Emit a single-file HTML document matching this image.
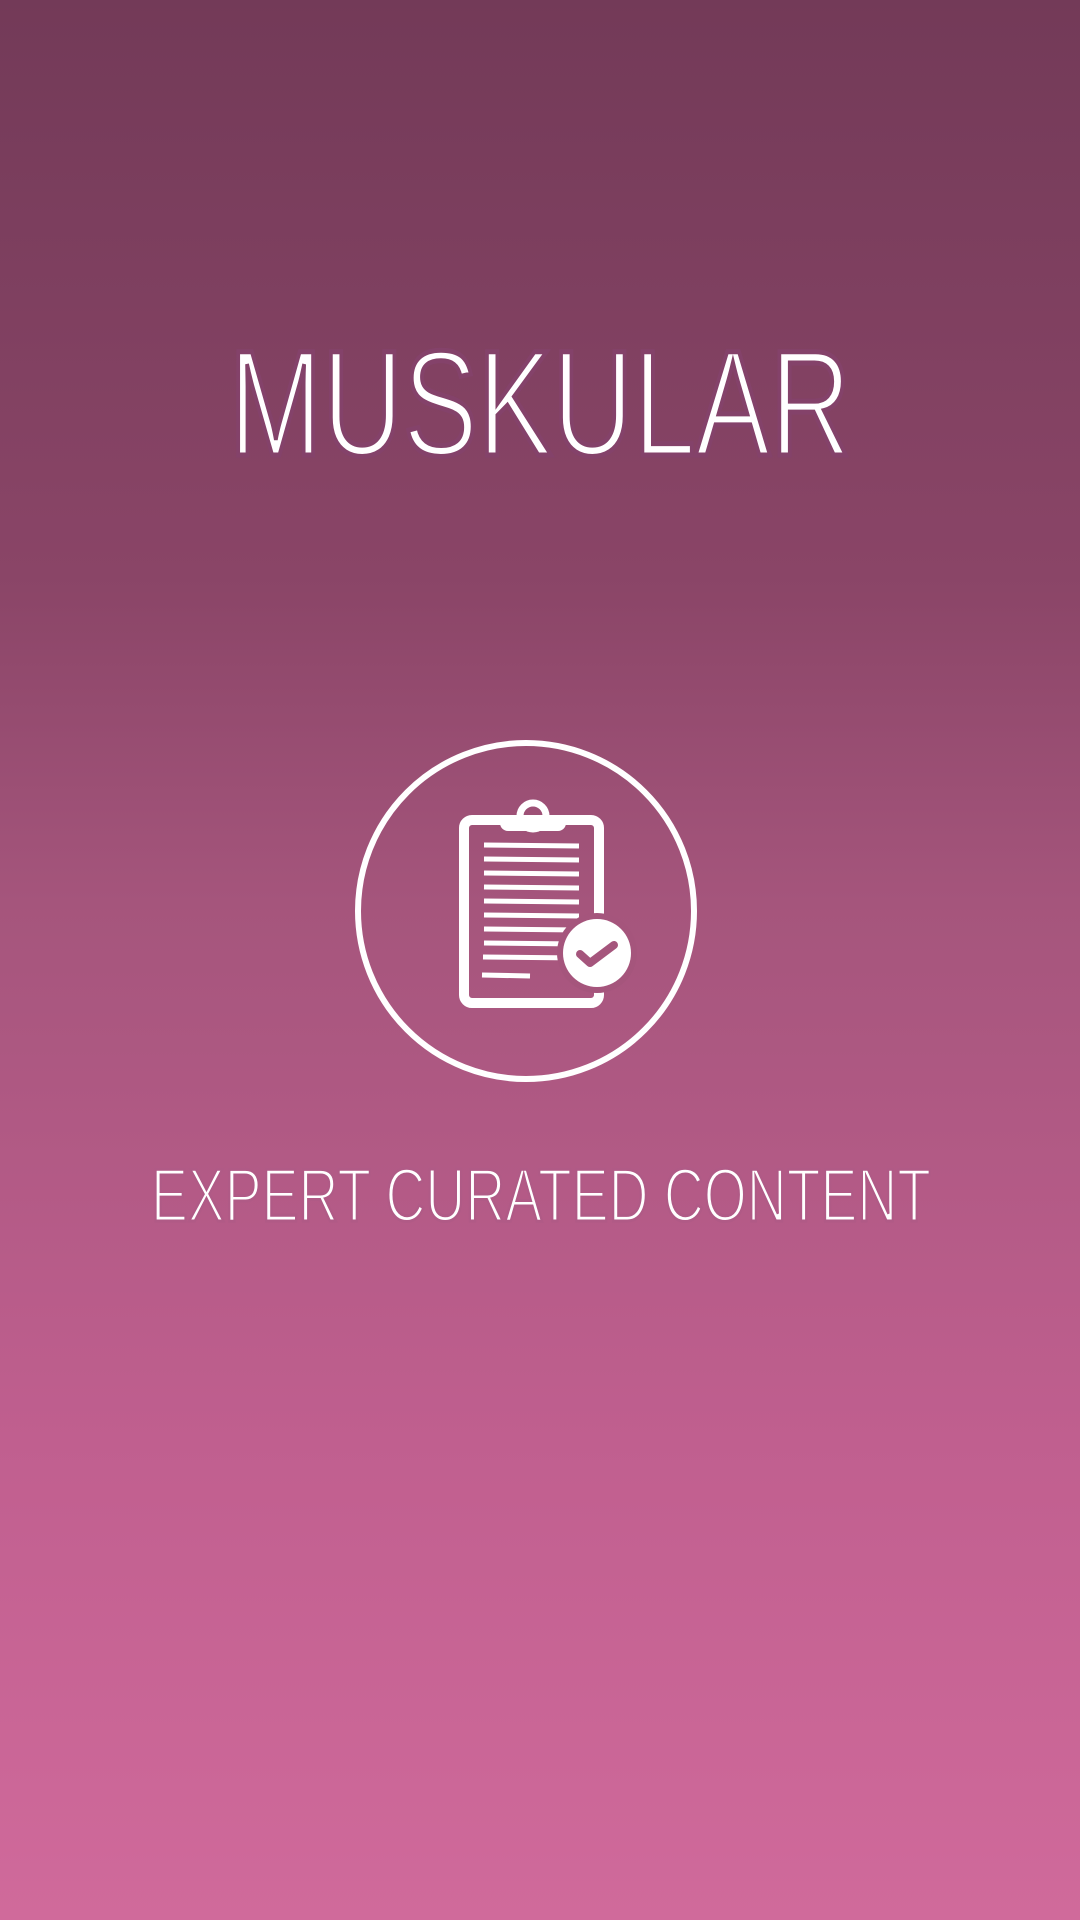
<!DOCTYPE html>
<html><head><meta charset="utf-8"><style>
html,body{margin:0;padding:0}
body{width:1080px;height:1920px;overflow:hidden;background:linear-gradient(180deg,#733a58 0%,#8a4567 30%,#a5557c 47%,#c05f8f 75%,#d06a9b 100%)}
svg{position:absolute;left:0;top:0}
</style></head><body>
<svg width="1080" height="1920" viewBox="0 0 1080 1920">
<text x="229" y="455" font-family="Liberation Sans, sans-serif" font-size="150" fill="#fff" stroke="#84426a" stroke-width="5" textLength="622" lengthAdjust="spacingAndGlyphs">MUSKULAR</text>
<circle cx="526" cy="911" r="168" fill="none" stroke="#fff" stroke-width="6"/>
<rect x="464" y="820" width="135" height="183" rx="8" fill="none" stroke="#fff" stroke-width="10"/>
<circle cx="533" cy="816" r="13" fill="none" stroke="#fff" stroke-width="7"/>
<rect x="500" y="815" width="66" height="16" rx="8" fill="#fff"/>
<g stroke="#fff" stroke-width="5">
<line x1="484" y1="845" x2="579" y2="846"/>
<line x1="484" y1="859" x2="579" y2="860"/>
<line x1="484" y1="873" x2="579" y2="874"/>
<line x1="484" y1="887" x2="579" y2="888"/>
<line x1="484" y1="901" x2="579" y2="902"/>
<line x1="484" y1="915" x2="579" y2="916"/>
<line x1="484" y1="929" x2="579" y2="930"/>
<line x1="484" y1="943" x2="579" y2="944"/>
<line x1="483" y1="957" x2="579" y2="958"/>
<line x1="482" y1="975" x2="530" y2="976"/>
</g>
<circle cx="597" cy="953" r="40" fill="#a5557c"/>
<circle cx="597" cy="953" r="34" fill="#fff"/>
<path d="M580 954 L590 963 L614 945" fill="none" stroke="#a5557c" stroke-width="8" stroke-linecap="round" stroke-linejoin="round"/>
<text x="151" y="1221" font-family="Liberation Sans, sans-serif" font-size="75" fill="#fff" stroke="#b05a86" stroke-width="3" textLength="780" lengthAdjust="spacingAndGlyphs">EXPERT CURATED CONTENT</text>
</svg>
</body></html>
